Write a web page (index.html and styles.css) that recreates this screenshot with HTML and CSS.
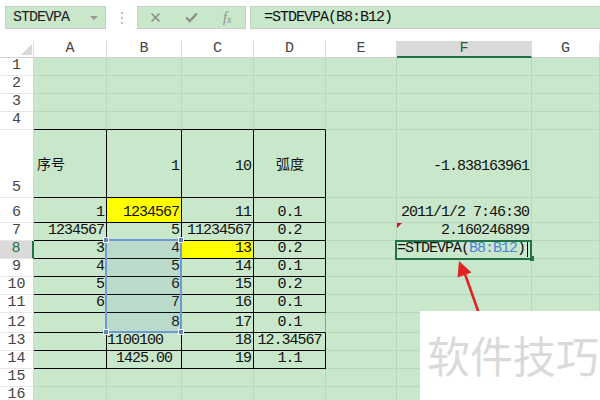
FILE: index.html
```html
<!DOCTYPE html>
<html lang="zh">
<head>
<meta charset="utf-8">
<title>STDEVPA</title>
<link rel="stylesheet" href="styles.css">
</head>
<body>
<div class="app">
  <div class="toolbar">
    <div class="namebox"><span>STDEVPA</span><i class="caret"></i></div>
    <div class="grip"><i></i><i></i><i></i></div>
    <div class="fxbtns">
      <span class="btn"><svg width="11" height="11" viewBox="0 0 11 11"><path d="M1.5 1.5L9.5 9.5M9.5 1.5L1.5 9.5" stroke="#8c8c8c" stroke-width="1.6" fill="none"/></svg></span>
      <span class="btn"><svg width="13" height="11" viewBox="0 0 13 11"><path d="M1.2 5.5L4.8 9L11.8 1.5" stroke="#8c8c8c" stroke-width="2.4" fill="none"/></svg></span>
      <span class="btn fx">f<small>x</small></span>
    </div>
    <div class="formula">=STDEVPA(B8:B12)</div>
  </div>

  <div class="sheet">
    <div class="corner"><i></i></div>
    <div class="ch">A</div><div class="ch">B</div><div class="ch">C</div><div class="ch">D</div><div class="ch">E</div><div class="ch sel">F</div><div class="ch">G</div>

    <div class="rh">1</div><div class="c"></div><div class="c"></div><div class="c"></div><div class="c"></div><div class="c"></div><div class="c"></div><div class="c"></div>
    <div class="rh">2</div><div class="c"></div><div class="c"></div><div class="c"></div><div class="c"></div><div class="c"></div><div class="c"></div><div class="c"></div>
    <div class="rh">3</div><div class="c"></div><div class="c"></div><div class="c"></div><div class="c"></div><div class="c"></div><div class="c"></div><div class="c"></div>
    <div class="rh">4</div><div class="c kb"></div><div class="c kb"></div><div class="c kb"></div><div class="c kb"></div><div class="c"></div><div class="c"></div><div class="c"></div>

    <div class="rh">5</div>
    <div class="c k mid cjk">序号</div>
    <div class="c k mid r">1</div>
    <div class="c k mid r">10</div>
    <div class="c k mid m cjk">弧度</div>
    <div class="c"></div>
    <div class="c mid r">-1.838163961</div>
    <div class="c"></div>

    <div class="rh">6</div>
    <div class="c k r">1</div>
    <div class="c k r y">1234567</div>
    <div class="c k r">11</div>
    <div class="c k m">0.1</div>
    <div class="c"></div>
    <div class="c r">2011/1/2 7:46:30</div>
    <div class="c"></div>

    <div class="rh">7</div>
    <div class="c k r">1234567</div>
    <div class="c k r">5</div>
    <div class="c k r">11234567</div>
    <div class="c k m">0.2</div>
    <div class="c"></div>
    <div class="c r"><i class="flag"></i>2.160246899</div>
    <div class="c"></div>

    <div class="rh sel">8</div>
    <div class="c k r">3</div>
    <div class="c k r">4</div>
    <div class="c k r y">13</div>
    <div class="c k m">0.2</div>
    <div class="c"></div>
    <div class="c edit">=STDEVPA(<span class="ref">B8:B12</span>)<span class="cursor"></span></div>
    <div class="c"></div>

    <div class="rh">9</div>
    <div class="c k r">4</div>
    <div class="c k r">5</div>
    <div class="c k r">14</div>
    <div class="c k m">0.1</div>
    <div class="c"></div><div class="c"></div><div class="c"></div>

    <div class="rh">10</div>
    <div class="c k r">5</div>
    <div class="c k r">6</div>
    <div class="c k r">15</div>
    <div class="c k m">0.2</div>
    <div class="c"></div><div class="c"></div><div class="c"></div>

    <div class="rh">11</div>
    <div class="c k r">6</div>
    <div class="c k r">7</div>
    <div class="c k r">16</div>
    <div class="c k m">0.1</div>
    <div class="c"></div><div class="c"></div><div class="c"></div>

    <div class="rh">12</div>
    <div class="c k r"></div>
    <div class="c k r">8</div>
    <div class="c k r">17</div>
    <div class="c k m org">0.1</div>
    <div class="c"></div><div class="c"></div><div class="c"></div>

    <div class="rh">13</div>
    <div class="c k"></div>
    <div class="c k l0">1100100</div>
    <div class="c k r">18</div>
    <div class="c k m">12.34567</div>
    <div class="c"></div><div class="c"></div><div class="c"></div>

    <div class="rh">14</div>
    <div class="c k"></div>
    <div class="c k m">1425.00</div>
    <div class="c k r">19</div>
    <div class="c k m">1.1</div>
    <div class="c"></div><div class="c"></div><div class="c"></div>

    <div class="rh">15</div><div class="c"></div><div class="c"></div><div class="c"></div><div class="c"></div><div class="c"></div><div class="c"></div><div class="c"></div>
    <div class="rh">16</div><div class="c"></div><div class="c"></div><div class="c"></div><div class="c"></div><div class="c"></div><div class="c"></div><div class="c"></div>

    <div class="selection"><i class="h tl"></i><i class="h tr"></i><i class="h bl"></i><i class="h br"></i></div>
    <div class="editbox"></div>
  </div>

  <svg class="arrow" viewBox="0 0 600 400" width="600" height="400">
    <line x1="465" y1="274" x2="482" y2="322" stroke="#e02424" stroke-width="2.6"/>
    <polygon points="459,261 471.5,272.5 457.5,277.5" fill="#e02424"/>
  </svg>

  <div class="watermark">软件技巧</div>
</div>
</body>
</html>
```

FILE: styles.css
```css
* { box-sizing: border-box; }

body {
  margin: 0;
  background: #fff;
  font-family: "Liberation Mono", "DejaVu Sans Mono", monospace;
  color: #111;
}

.app {
  position: relative;
  width: 600px;
  height: 400px;
  overflow: hidden;
  background: #fff;
}

/* ---------- formula toolbar ---------- */
.toolbar {
  display: flex;
  align-items: flex-start;
  height: 41px;
  padding: 6px 0 0 5px;
}

.namebox {
  display: flex;
  align-items: center;
  width: 101px;
  height: 23px;
  padding-left: 7px;
  background: #c9e7cb;
  border: 1px solid #c4d0c4;
  font-size: 15px;
  letter-spacing: -1px;
  color: #222;
}

.caret {
  margin-left: auto;
  margin-right: 7px;
  width: 0;
  height: 0;
  border-left: 4px solid transparent;
  border-right: 4px solid transparent;
  border-top: 4px solid #9a9a9a;
}

.grip {
  display: flex;
  flex-direction: column;
  align-items: center;
  justify-content: center;
  gap: 3px;
  width: 31px;
  height: 23px;
}

.grip i {
  width: 2px;
  height: 2px;
  background: #bdbdbd;
}

.fxbtns {
  display: flex;
  width: 109px;
  height: 23px;
  background: #c9e7cb;
  border: 1px solid #c4d0c4;
}

.btn {
  flex: 1;
  display: flex;
  align-items: center;
  justify-content: center;
}

.fx {
  font-family: "Liberation Serif", serif;
  font-style: italic;
  font-size: 14px;
  color: #8c8c8c;
}

.fx small {
  font-size: 10px;
  margin-top: 3px;
}

.formula {
  flex: 1;
  height: 23px;
  margin-left: 4px;
  padding-left: 13px;
  display: flex;
  align-items: center;
  background: #c9e7cb;
  border: 1px solid #c4d0c4;
  border-right: none;
  font-size: 15px;
  letter-spacing: -1px;
  color: #111;
}

/* ---------- sheet grid ---------- */
.sheet {
  position: relative;
  display: grid;
  grid-template-columns: 34px 73px 75px 72px 72px 71px 135px 68px;
  grid-template-rows: 17px repeat(4, 18px) 68px 25px repeat(5, 18px) 20px repeat(4, 18px);
  font-size: 15px;
  line-height: 16px;
}

.corner {
  display: flex;
  justify-content: flex-end;
  align-items: flex-end;
  padding: 0 1px 2px 0;
  background: #fff;
  border-right: 1px solid #dcdcdc;
  border-bottom: 1px solid #d2d2d2;
}

.corner i {
  width: 0;
  height: 0;
  border-left: 11px solid transparent;
  border-bottom: 11px solid #d8d8d8;
}

.ch {
  display: flex;
  align-items: center;
  justify-content: center;
  background: #fff;
  border-right: 1px solid #dcdcdc;
  border-bottom: 1px solid #d2d2d2;
  color: #444;
}

.ch.sel {
  background: #dadada;
  border-bottom: 2px solid #217346;
  color: #2c5c3a;
}

.rh {
  display: flex;
  align-items: flex-end;
  justify-content: center;
  padding-bottom: 1px;
  background: #fff;
  border-right: 1px solid #d6d6d6;
  border-bottom: 1px solid #e6e6e6;
  color: #444;
}

.rh.sel {
  background: #dadada;
  border-right: 2px solid #217346;
  color: #217346;
}

.c {
  position: relative;
  display: flex;
  align-items: flex-end;
  padding: 0 2px 1px 2px;
  background: #c9e7cb;
  border-right: 1px solid #b8d6ba;
  border-bottom: 1px solid #b8d6ba;
  letter-spacing: -1px;
  white-space: nowrap;
  color: #111;
}

.c.r { justify-content: flex-end; }
.c.m { justify-content: center; }
.c.l0 { padding-left: 0; }
.c.mid { align-items: center; }
.c.mid.r { padding-top: 8px; }
.c.y { background: #ffff00; }
.c.k { border-right-color: #000; border-bottom-color: #000; }
.c.kb { border-bottom-color: #000; }
.c.org { border-right-color: #f07a5a; }

.c.cjk {
  font-family: "Noto Sans CJK SC", sans-serif;
  font-size: 14px;
  letter-spacing: 0;
  padding-left: 3px;
}

.flag {
  position: absolute;
  left: 0;
  top: 0;
  width: 0;
  height: 0;
  border-top: 5px solid #d0101b;
  border-right: 5px solid transparent;
}

.c.edit {
  padding-left: 0;
  align-items: center;
}

.ref { color: #4f86d3; }

.cursor {
  width: 1px;
  height: 15px;
  margin-left: 2px;
  background: #000;
}

/* overlays bound to grid areas */
.selection {
  position: absolute;
  grid-column: 3 / 4;
  grid-row: 9 / 14;
  left: -2px;
  top: -2px;
  right: 0;
  bottom: 0;
  border: 2px solid #6f98d6;
  background: rgba(90, 130, 200, 0.12);
}

.h {
  position: absolute;
  width: 6px;
  height: 6px;
  background: #5b86c8;
  border: 1px solid #fff;
}

.tl { left: -4px; top: -4px; }
.tr { right: -4px; top: -4px; }
.bl { left: -4px; bottom: -4px; }
.br { right: -4px; bottom: -4px; }

.editbox {
  position: absolute;
  grid-column: 7 / 8;
  grid-row: 9 / 10;
  left: -2px;
  top: -1px;
  right: 0;
  bottom: -1px;
  border: 2px solid #217346;
}

.editbox::after {
  content: "";
  position: absolute;
  right: -4px;
  bottom: -3px;
  width: 4px;
  height: 5px;
  background: #217346;
}

/* ---------- annotation ---------- */
.arrow {
  position: absolute;
  left: 0;
  top: 0;
  pointer-events: none;
}

.watermark {
  position: absolute;
  left: 420px;
  top: 311px;
  width: 180px;
  height: 89px;
  padding: 22px 0 0 7px;
  background: #fff;
  font-family: "Noto Sans CJK SC", sans-serif;
  font-size: 43px;
  line-height: 43px;
  color: #dadada;
  white-space: nowrap;
}
```
